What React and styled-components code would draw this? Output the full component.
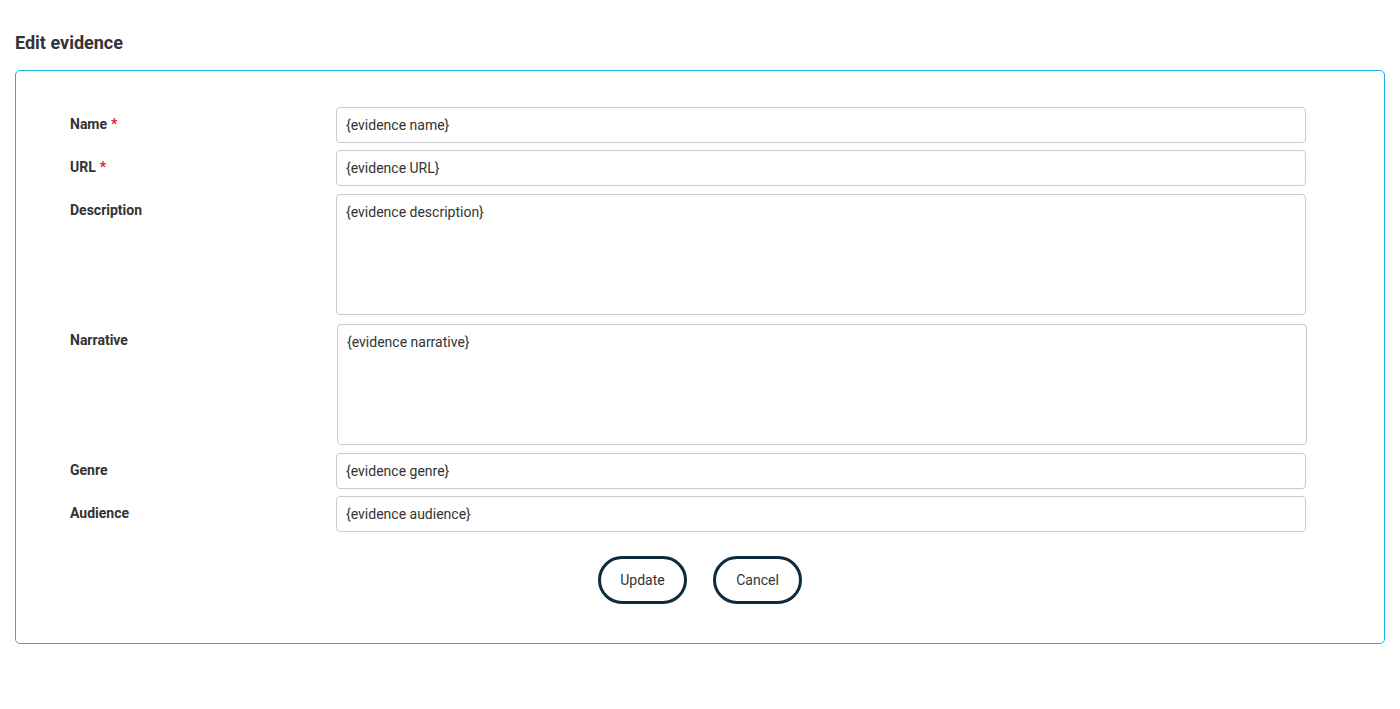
import React from 'react'
import styled, { createGlobalStyle } from 'styled-components';

const GlobalStyle = createGlobalStyle`
  body {
    margin: 0;
    background: #fff;
    font-family: Roboto, 'Liberation Sans', sans-serif;
    color: #333;
  }
`;

const fields = [
  { id: 'name', label: 'Name', required: true, value: '{evidence name}' },
  { id: 'url', label: 'URL', required: true, value: '{evidence URL}' },
  { id: 'description', label: 'Description', multiline: true, value: '{evidence description}' },
  { id: 'narrative', label: 'Narrative', multiline: true, value: '{evidence narrative}', shift: 1 },
  { id: 'genre', label: 'Genre', value: '{evidence genre}' },
  { id: 'audience', label: 'Audience', value: '{evidence audience}' },
];

const EditEvidence = () => {
  return (
    <Page>
      <Title>Edit evidence</Title>
      <Card>
        {fields.map(f => (
          <Row key={f.id}>
            <Label htmlFor={f.id}>
              {f.label}
              {f.required && <Star>*</Star>}
            </Label>
            {f.multiline
              ? <TextArea id={f.id} defaultValue={f.value} $shift={f.shift} />
              : <Input id={f.id} defaultValue={f.value} />}
          </Row>
        ))}
        <Actions>
          <PillButton type="button">Update</PillButton>
          <PillButton type="button">Cancel</PillButton>
        </Actions>
      </Card>
    </Page>
  );
}

export default function App() {
  return (
    <>
      <GlobalStyle />
      <EditEvidence />
    </>
  )
}

const Page = styled.div`
  padding: 32px 15px 0;
`;

const Title = styled.h2`
  margin: 0 0 16px;
  font-size: 18px;
  line-height: 22px;
  font-weight: 700;
  color: #333;
`;

const Card = styled.div`
  border: 1px solid #1ab4e6;
  border-radius: 5px;
  padding: 36px 54px 39px;
  display: flex;
  flex-direction: column;
  gap: 7px;
`;

const Row = styled.div`
  display: grid;
  grid-template-columns: 266px 1fr;
  align-items: start;
  padding-right: 24px;
`;

const Label = styled.label`
  padding-top: 9px;
  font-size: 14px;
  line-height: 16px;
  font-weight: 700;
  color: #333;
`;

const Star = styled.span`
  color: #d9262c;
  margin-left: 4px;
`;

const fieldBase = `
  box-sizing: border-box;
  width: 100%;
  border: 1px solid #cacaca;
  border-radius: 4px;
  font-family: Roboto, 'Liberation Sans', sans-serif;
  font-size: 14px;
  color: #333;
  background: #fff;
  outline: none;
  margin: 0;
`;

const Input = styled.input`
  ${fieldBase}
  height: 36px;
  padding: 0 9px;
`;

const TextArea = styled.textarea`
  ${fieldBase}
  display: block;
  height: 121px;
  padding: 9px 9px;
  line-height: 17px;
  resize: none;
  margin: 1px 0 1px ${p => p.$shift || 0}px;
  width: 100%;
`;

const Actions = styled.div`
  display: flex;
  justify-content: center;
  gap: 26px;
  margin-top: 17px;
`;

const PillButton = styled.button`
  width: 89px;
  height: 48px;
  border: 3px solid #0e2a3d;
  border-radius: 24px;
  background: #fff;
  font-family: Roboto, 'Liberation Sans', sans-serif;
  font-size: 14px;
  color: #333;
  cursor: pointer;
`;
